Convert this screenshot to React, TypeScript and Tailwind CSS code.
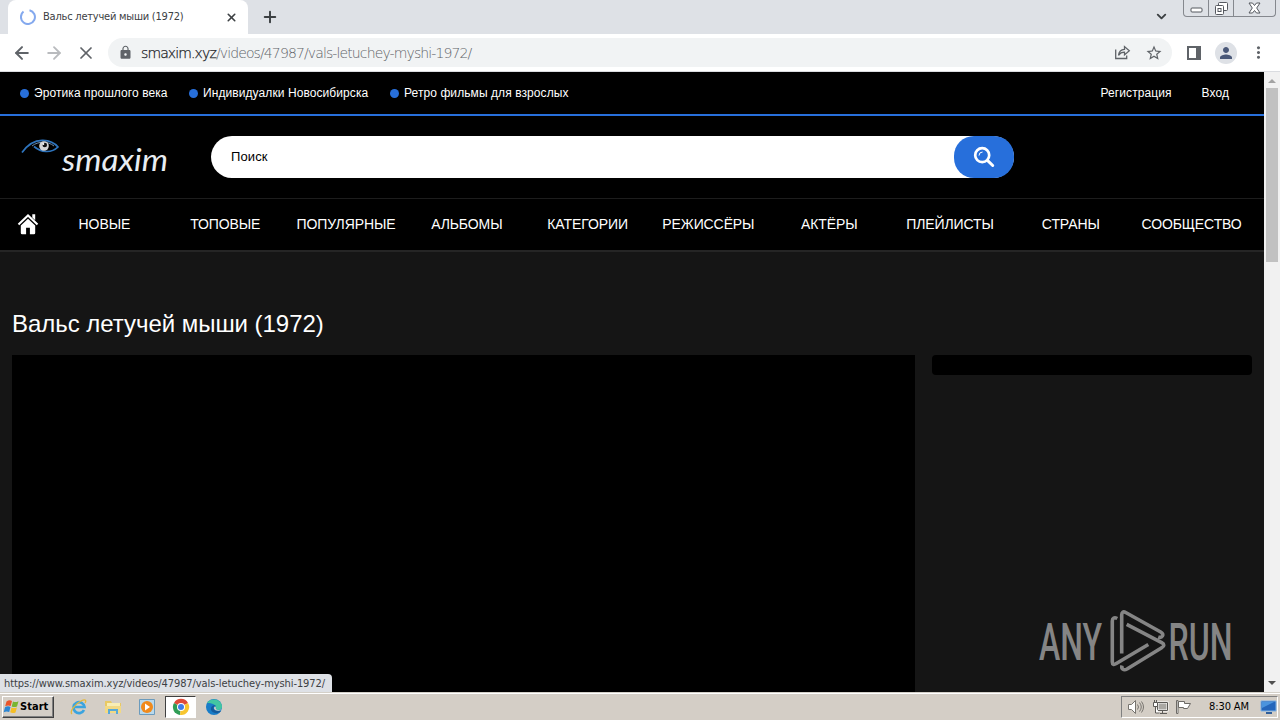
import type { ReactNode } from "react";
import { ChevronDown, Plus, X, ArrowLeft, ArrowRight } from "lucide-react";
import { MdLock, MdStarBorder, MdMoreVert, MdPerson } from "react-icons/md";

const topLinks = [
  { label: "Эротика прошлого века", className: "w-[169px]" },
  { label: "Индивидуалки Новосибирска", className: "w-[201px]" },
  { label: "Ретро фильмы для взрослых", className: "w-[190px]" },
];

const menu = [
  "Новые",
  "Топовые",
  "Популярные",
  "Альбомы",
  "Категории",
  "Режиссёры",
  "Актёры",
  "Плейлисты",
  "Страны",
  "Сообщество",
];

export default function App() {
  return (
    <div className="flex h-[720px] w-[1280px] flex-col overflow-hidden bg-black font-['Liberation_Sans',Arial,sans-serif]">
      <TabStrip />
      <Toolbar />
      <div className="relative flex h-[620px] shrink-0">
        <Page />
        <Scrollbar />
        <div className="absolute bottom-0 left-0 h-[18px] w-[332px] rounded-tr-[4px] bg-[#dee1e6] pl-1 font-['DejaVu_Sans_Condensed','DejaVu_Sans',sans-serif] text-[11px] leading-[19px] tracking-[-0.08px] whitespace-nowrap text-[#3c4043]">
          https://www.smaxim.xyz/videos/47987/vals-letuchey-myshi-1972/
        </div>
      </div>
      <Taskbar />
    </div>
  );
}

function TabStrip() {
  return (
    <div className="flex h-[34px] shrink-0 bg-[#dee1e6]">
      <div className="ml-2 flex h-full w-[240px] items-center rounded-t-lg bg-white pl-3">
        <svg width="16" height="16" viewBox="0 0 16 16" fill="none" className="shrink-0">
          <path d="M9.500 1.200A7 7 0 1 1 3.500 2.600" stroke="#84a9ee" strokeWidth="2" />
        </svg>
        <span className="mt-px ml-[7px] w-[176px] font-['DejaVu_Sans_Condensed','DejaVu_Sans',sans-serif] text-[11px] tracking-[-0.22px] whitespace-nowrap text-[#3c4043]">
          Вальс летучей мыши (1972)
        </span>
        <X size={13} strokeWidth={3} className="ml-[6px] text-[#3c4043]" />
      </div>
      <Plus size={18} strokeWidth={2.6} className="mt-2 ml-[13px] text-[#3c4043]" />
      <ChevronDown size={15} strokeWidth={3} className="mt-[9px] ml-auto text-[#3c4043]" />
      <div className="ml-[14px] flex h-[17px] w-[93px] rounded-b-[4px] border border-t-0 border-[#85888e] text-[#55585f]">
        <div className="flex w-[25px] items-center justify-center border-r border-[#85888e]">
          <svg width="13" height="6" viewBox="0 0 13 6" fill="none" className="mt-[4px]">
            <rect x="1" y="1" width="11" height="4" rx="1" fill="#fff" stroke="currentColor" />
          </svg>
        </div>
        <div className="flex w-[25px] items-center justify-center border-r border-[#85888e]">
          <svg width="13" height="13" viewBox="0 0 13 13" fill="#fff" stroke="currentColor">
            <rect x="3.5" y="0.5" width="9" height="8" rx="1" />
            <rect x="0.5" y="3.5" width="8" height="9" rx="1" />
            <rect x="3" y="6.5" width="3" height="3" />
          </svg>
        </div>
        <div className="flex flex-1 items-center justify-center">
          <svg width="13" height="12" viewBox="0 0 13 12" fill="#fff" stroke="currentColor" strokeWidth="1">
            <path d="M1 1h3.5l2 2.5 2-2.5H12L8.7 6l3.3 5H8.5l-2-2.5-2 2.500H1l3.300-5z" />
          </svg>
        </div>
      </div>
      <div className="w-[4px]" />
    </div>
  );
}

function Toolbar() {
  return (
    <div className="flex h-[38px] shrink-0 items-center border-b border-[#dadce0] bg-white text-[#5f6368]">
      <ArrowLeft size={20} strokeWidth={2.4} className="ml-[12px]" />
      <ArrowRight size={20} strokeWidth={2.2} className="ml-[12px] text-[#b9bbbe]" />
      <X size={20} strokeWidth={2.1} className="ml-[12px]" />
      <div className="ml-[12px] flex h-[29px] w-[1064px] items-center rounded-full bg-[#f1f3f4] pl-[10px]">
        <MdLock size={15} />
        <div className="mt-px ml-[8px] font-['DejaVu_Sans',sans-serif] text-[14px] font-extralight tracking-[-0.88px] whitespace-nowrap text-[#5f6368]">
          <span className="text-[#202124] [-webkit-text-stroke:0.25px_#202124]">smaxim.xyz</span>
          /videos/47987/vals-letuchey-myshi-1972/
        </div>
        <svg width="17" height="15" viewBox="0 0 17 15" fill="none" stroke="currentColor" strokeWidth="1.3" className="ml-auto">
          <path d="M1.7 4.5v9h11v-3" />
          <path d="M4.5 10.3c.5-4 2.8-5.7 6-5.9V1.600l4.800 4.200-4.800 4.100V7.200c-2.700 0-4.500.8-6 3.100z" />
        </svg>
        <MdStarBorder size={18} className="mr-[9px] ml-[14px]" />
      </div>
      <svg width="14" height="14" viewBox="0 0 14 14" className="ml-[15px]" fill="none">
        <rect x="1" y="1" width="12" height="12" stroke="currentColor" strokeWidth="2" />
        <path d="M9 1h4v12H9z" fill="currentColor" />
      </svg>
      <div className="ml-[14px] flex size-[22px] items-center justify-center rounded-full bg-[#dee1e6]">
        <MdPerson size={18} color="#4a5878" />
      </div>
      <MdMoreVert size={19} className="ml-[12px]" />
    </div>
  );
}

function Page() {
  return (
    <div className="h-full w-[1264px] shrink-0 bg-[#151515] text-white">
      <div className="flex h-[44px] items-center border-b-2 border-[#276fdb] bg-black pl-5 text-[12px] tracking-[0.08px]">
        {topLinks.map((link) => (
          <a key={link.label} className={`flex shrink-0 items-center whitespace-nowrap ${link.className}`}>
            <i className="mr-[5px] size-[9px] rounded-full bg-[#276fdb]" />
            {link.label}
          </a>
        ))}
        <a className="mr-[30px] ml-auto">Регистрация</a>
        <a className="mr-[35px]">Вход</a>
      </div>

      <header className="flex h-[83px] items-center border-b border-[#1d1d1d] bg-black">
        <Logo />
        <form className="ml-[31px] flex h-[42px] w-[803px] rounded-full bg-white">
          <span className="flex-1 pl-5 text-[13px] leading-[41px] tracking-[0.1px] text-black">Поиск</span>
          <button type="button" className="flex w-[60px] items-center justify-center rounded-[20px] bg-[#276fdb]">
            <svg width="22" height="22" viewBox="0 0 22 22" fill="none" stroke="#fff" strokeLinecap="round">
              <circle cx="9.200" cy="9.200" r="7" strokeWidth="2.700" />
              <path d="M6 9.200A3.200 3.200 0 0 1 9.200 6" strokeWidth="1" />
              <path d="M14.700 14.700l5 4.800" strokeWidth="3" />
            </svg>
          </button>
        </form>
      </header>

      <nav className="flex h-[53px] items-center border-b-2 border-[#252525] bg-black pr-3">
        <svg width="22" height="22" viewBox="0 0 22 22" fill="#fff" className="mr-[5px] mb-px ml-[17px] shrink-0">
          <path d="M11 5.800l-7.200 6.700V20q0 1.300 1.300 1.300h4v-6.600h3.800v6.600h4q1.300 0 1.300-1.300v-7.500z" />
          <path d="M1.500 11.500L11 2.500l9.500 9" stroke="#fff" strokeWidth="2.100" fill="none" />
          <path d="M15.300 1.200h2.900v6l-2.900-2.800z" />
        </svg>
        {menu.map((item) => (
          <a key={item} className="w-0 flex-1 text-center text-[14px] tracking-[-0.1px] whitespace-nowrap uppercase">
            {item}
          </a>
        ))}
      </nav>

      <main className="px-3 pt-[56px]">
        <h1 className="h-[47px] text-[24px] leading-[32px] tracking-[-0.04px] whitespace-nowrap">Вальс летучей мыши (1972)</h1>
        <div className="flex items-start gap-[17px]">
          <div className="h-[337px] w-[903px] bg-black" />
          <div className="flex h-[337px] flex-1 flex-col justify-between">
            <div className="h-5 rounded-[4px] bg-black" />
            <AnyRun />
          </div>
        </div>
      </main>
    </div>
  );
}

function Logo() {
  return (
    <svg width="160" height="50" viewBox="0 0 160 50" className="ml-5 shrink-0">
      <path
        d="M2 20.500C8 12 15 8 23 8.300c7 .2 12 3 15 6.700-3 3-7 4.700-12 4.500-5-.2-9-2.500-12-5"
        fill="none"
        stroke="#2e74bd"
        strokeWidth="1.700"
      />
      <path d="M12 14c6-5 16-5 22 0" fill="none" stroke="#8db0d4" strokeWidth="0.800" />
      <circle cx="24" cy="14" r="4.800" fill="#d6d6d6" />
      <circle cx="24.800" cy="13" r="2.300" fill="#111" />
      <circle cx="23.300" cy="12" r="1" fill="#fff" />
      <text
        x="42"
        y="39"
        textLength="106"
        lengthAdjust="spacingAndGlyphs"
        fill="#e8edf2"
        className="font-['Lato',sans-serif] text-[30px] italic"
      >
        smaxim
      </text>
    </svg>
  );
}

function AnyRun() {
  return (
    <svg width="208" height="64" viewBox="0 0 208 64" className="mb-[19px] ml-[105px] shrink-0" fill="#858585">
      <g className="font-['Roboto',sans-serif] text-[52px] font-medium">
        <text x="2" y="50.500" textLength="63" lengthAdjust="spacingAndGlyphs">ANY</text>
        <text x="131.500" y="50.500" textLength="64" lengthAdjust="spacingAndGlyphs">RUN</text>
      </g>
      <g fill="none" stroke="#858585" strokeWidth="3.600" strokeLinejoin="round">
        <path d="M80.300 9.500c-3-1.500-5-.5-5 2.500v41c0 2.500 1.500 3 4 1.500l32-19" />
        <path d="M84.700 44.500V6c0-2.800 1.500-3.800 4-2.500l35 19.500c4 2.500 1.500 6.500-2.500 5" />
        <path d="M89.700 15.300l35 18.400c2.800 1.500 2.800 3.500 0 5L90 60c-3.500 2-6-.5-5-3.500" />
      </g>
    </svg>
  );
}

function Scrollbar() {
  return (
    <div className="flex w-4 flex-col items-center bg-[#f1f1f1]">
      <div className="mt-[7px] border-x-4 border-b-4 border-x-transparent border-b-[#a3a3a3]" />
      <div className="mt-[5px] h-[174px] w-3 bg-[#c1c1c1]" />
      <div className="mt-auto mb-[7px] border-x-4 border-t-4 border-x-transparent border-t-[#505050]" />
    </div>
  );
}

function TaskIcon({ children }: { children: ReactNode }) {
  return (
    <svg width="18" height="18" viewBox="0 0 18 18" fill="none">
      {children}
    </svg>
  );
}

function Taskbar() {
  return (
    <div className="flex h-[28px] shrink-0 items-center border-t border-[#d4d0c8] bg-[#d4cec6] pt-px font-['DejaVu_Sans_Condensed','DejaVu_Sans',sans-serif] text-[11px] text-black shadow-[inset_0_1px_0_#fff]">
      <div className="ml-[2px] flex h-[22px] w-[52px] items-center border border-t-white border-r-[#404040] border-b-[#404040] border-l-white shadow-[inset_-1px_-1px_0_#808080]">
        <svg width="17" height="16" viewBox="0 0 17 16" className="shrink-0">
          <path d="M3.500 2.500q3-2 5.500-.5L7.700 7q-2.700-1.300-5.500.3z" fill="#e9552b" />
          <path d="M10 2.500q2.500 1.300 5.500-.3L14 7.500q-2.800 1.200-5.300 0z" fill="#79b530" />
          <path d="M2 8.200q2.700-1.500 5.500-.3L6.200 13q-2.700-1.300-5.500.3z" fill="#2c86d3" />
          <path d="M8.500 8.500q2.700 1.200 5.400 0l-1.400 5q-2.800 1.300-5.300-.2z" fill="#f5be25" />
        </svg>
        <b className="tracking-[0.05px]">Start</b>
      </div>
      <div className="ml-[16px] flex items-center gap-[16px]">
        <TaskIcon>
          <path d="M14 12a5.500 5.500 0 1 1 .5-3H5" stroke="#3ba4df" strokeWidth="2.700" />
          <path d="M2 16c-3-2 3-10 9-13 4-2 6-1 4 2" stroke="#e4b83b" strokeWidth="1.300" />
        </TaskIcon>
        <TaskIcon>
          <path d="M1 3h6l1 2h9v10H1z" fill="#e9c963" />
          <path d="M3 5h13v4H3z" fill="#f8edb5" />
          <path d="M1 8h16v7H1z" fill="#f2d984" />
          <path d="M4 16v-5h10v5h-2v-3H6v3z" fill="#58a9d8" />
        </TaskIcon>
        <TaskIcon>
          <path d="M1.500 1.500h15v15h-15z" fill="#b9d9ec" stroke="#6b9bbd" />
          <circle cx="9" cy="9" r="6" fill="#f08a1c" />
          <path d="M7 5.500l5 3.500-5 3.500z" fill="#fff" />
        </TaskIcon>
      </div>
      <div className="ml-[9px] flex h-[22px] w-[31px] items-center justify-center border border-t-[#404040] border-r-white border-b-white border-l-[#404040] bg-white">
        <TaskIcon>
          <path d="M9 9L2 5a8 8 0 0 1 14 0z" fill="#df4b38" />
          <path d="M9 9L2 5a8 8 0 0 0 6 12z" fill="#309d56" />
          <path d="M9 9l7-4a8 8 0 0 1-8 12z" fill="#f7c52e" />
          <circle cx="9" cy="9" r="4" fill="#fff" />
          <circle cx="9" cy="9" r="3" fill="#3f7de8" />
        </TaskIcon>
      </div>
      <div className="ml-[9px]">
        <TaskIcon>
          <circle cx="9" cy="9" r="8" fill="#187cc8" />
          <path d="M2 5c4-6 15-4 15 4 0 3-5 4-6 2 1-4-3-6-9-6z" fill="#43c6a2" />
          <path d="M11 8c-4 0-4 6 5 5-3 4-11 2-10-3 .5-2 3-4 5-2z" fill="#145a9c" />
          <path d="M10 8.500c1 0 1 1 .8 2 .8 1.700 3.500 2 6 .8-1 2-7 2-7.800-.8 0-1 .3-1.700 1-2z" fill="#d4cec6" />
        </TaskIcon>
      </div>
      <div className="mr-[2px] ml-auto flex h-[22px] w-[157px] items-center border border-t-[#808080] border-r-white border-b-white border-l-[#808080] pl-[5px]">
        <svg width="18" height="16" viewBox="0 0 18 16" fill="none" stroke="#77746f">
          <path d="M1.500 5.500h3l4-4v13l-4-4h-3z" fill="#fff" />
          <path d="M10.500 5.500q2 2.500 0 5M12.500 3.500q3.500 4.500 0 9M14.500 2.500q4 5.500 0 11" />
        </svg>
        <svg width="17" height="16" viewBox="0 0 17 16" fill="none" stroke="#5c5a57" className="ml-[7px]">
          <path d="M5.500 3.500h10v8h-10z" fill="#aaa8a4" stroke="#fff" strokeWidth="2" />
          <path d="M5.500 3.500h10v8h-10zM8 14.500h7M10.500 12v2" />
          <path d="M1.500 3.500h4v4h-4zM2.500 1v2M4.500 1v2M3.500 8v6h4" fill="#fff" />
        </svg>
        <svg width="17" height="16" viewBox="0 0 17 16" fill="#fff" stroke="#6d6a66" className="ml-[6px]">
          <path d="M1.500 1.500h1.500v13H1.500z" />
          <path d="M3.500 2.500h6v2h6l-3 5h-4v-1h-5z" />
        </svg>
        <span className="ml-[17px] tracking-[-0.1px] whitespace-nowrap">8:30 AM</span>
        <svg width="17" height="14" viewBox="0 0 17 14" className="ml-auto shrink-0">
          <path d="M1 1h15v10H1z" fill="#2466bb" stroke="#7eb1e4" />
          <path d="M2 2h12L2 8z" fill="#4a94de" />
          <path d="M6 12h6v2H6z" fill="#315f9a" />
        </svg>
      </div>
    </div>
  );
}
